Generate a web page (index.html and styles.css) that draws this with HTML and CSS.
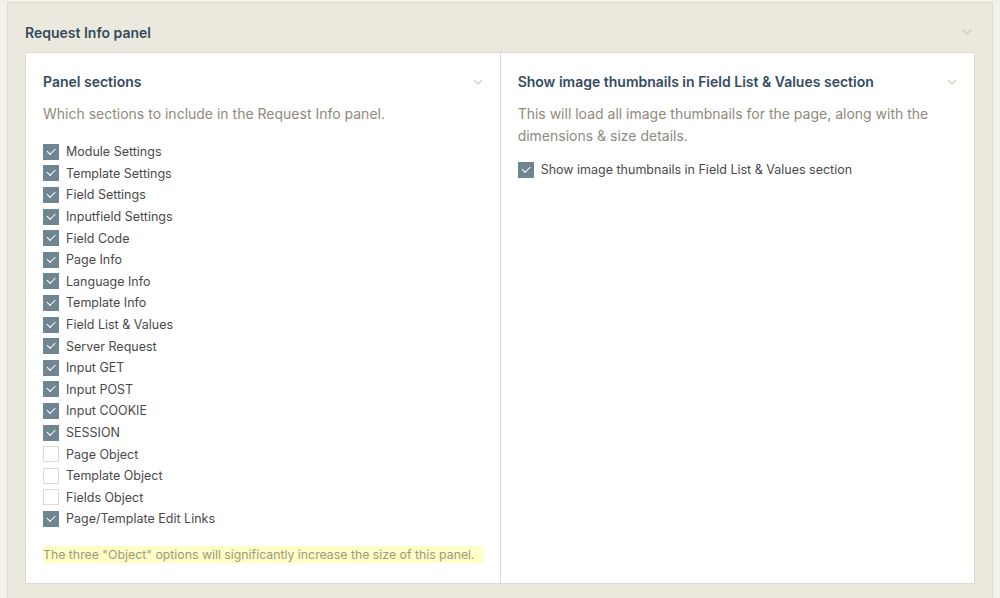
FILE: index.html
```html
<!DOCTYPE html>
<html lang="en">
<head>
  <meta charset="UTF-8" />
  <title>Request Info panel</title>
  <link rel="stylesheet" href="styles.css">
</head>
<body>

  <div class="wrapper">
    <div class="field">
      <div class="field-header">
        <span>Request Info panel</span>
        <svg class="chevron" width="10" height="6" viewBox="0 0 10 6"><path d="M1 1l4 4 4-4" /></svg>
      </div>

      <div class="field-content">
        <div class="col">
          <div class="col-header">
            <span>Panel sections</span>
            <svg class="chevron" width="10" height="6" viewBox="0 0 10 6"><path d="M1 1l4 4 4-4" /></svg>
          </div>
          <p class="desc">Which sections to include in the Request Info panel.</p>

          <ul class="checks">
            <li><span class="box on"></span>Module Settings</li>
            <li><span class="box on"></span>Template Settings</li>
            <li><span class="box on"></span>Field Settings</li>
            <li><span class="box on"></span>Inputfield Settings</li>
            <li><span class="box on"></span>Field Code</li>
            <li><span class="box on"></span>Page Info</li>
            <li><span class="box on"></span>Language Info</li>
            <li><span class="box on"></span>Template Info</li>
            <li><span class="box on"></span>Field List &amp; Values</li>
            <li><span class="box on"></span>Server Request</li>
            <li><span class="box on"></span>Input GET</li>
            <li><span class="box on"></span>Input POST</li>
            <li><span class="box on"></span>Input COOKIE</li>
            <li><span class="box on"></span>SESSION</li>
            <li><span class="box"></span>Page Object</li>
            <li><span class="box"></span>Template Object</li>
            <li><span class="box"></span>Fields Object</li>
            <li><span class="box on"></span>Page/Template Edit Links</li>
          </ul>

          <p class="notes"><span>The three "Object" options will significantly increase the size of this panel.</span></p>
        </div>

        <div class="col">
          <div class="col-header">
            <span>Show image thumbnails in Field List &amp; Values section</span>
            <svg class="chevron" width="10" height="6" viewBox="0 0 10 6"><path d="M1 1l4 4 4-4" /></svg>
          </div>
          <p class="desc">This will load all image thumbnails for the page, along with the dimensions &amp; size details.</p>

          <ul class="checks">
            <li><span class="box on"></span>Show image thumbnails in Field List &amp; Values section</li>
          </ul>
        </div>
      </div>
    </div>
  </div>

</body>
</html>
```

FILE: styles.css
```css
body {
  margin: 0;
  padding: 0;
  background: #f3f2ea;
  font-family: Inter, 'Noto Sans', sans-serif;
  color: #354b60;
}

.wrapper {
  padding: 2px 7px 0 7px;
}

.field {
  background: #ebe9dd;
  border: 1px solid #dedcd0;
  border-bottom: none;
  padding: 0 17px 14px 17px;
  height: 600px;
  box-sizing: border-box;
}

.field-header,
.col-header {
  display: flex;
  justify-content: space-between;
  align-items: center;
  font-weight: 600;
  font-size: 14px;
}

.field-header {
  height: 49px;
  padding-top: 9px;
  box-sizing: border-box;
  margin-right: 3px;
}

.chevron {
  fill: none;
  stroke: #cdc9b6;
  stroke-width: 1.1;
}

.field-content {
  display: flex;
  background: #fff;
  border: 1px solid #dedcd0;
  height: 532px;
  box-sizing: border-box;
}

.col {
  flex: 1;
  padding: 20px 17px 0 17px;
}

.col + .col {
  border-left: 1px solid #dedcd0;
}

.col-header {
  height: 17px;
}

.desc {
  margin: 13px 0 0;
  font-size: 14px;
  line-height: 22px;
  color: #8e8a7c;
  font-weight: 400;
}

.checks {
  list-style: none;
  margin: 16px 0 0;
  padding: 0;
  font-size: 12.5px;
  color: #4a4a4a;
}

.col + .col .checks {
  margin-top: 12px;
}

.checks li {
  display: flex;
  align-items: center;
  height: 21.6px;
}

.box {
  width: 14px;
  height: 14px;
  margin-right: 7px;
  border: 1px solid #dedcd0;
  background: #fff;
  flex-shrink: 0;
  position: relative;
}

.box.on {
  background: #6f8592;
  border-color: #6f8592;
}

.box.on::after {
  content: "";
  position: absolute;
  left: 3px;
  top: 3px;
  width: 7px;
  height: 3.5px;
  border-left: 1.5px solid #fff;
  border-bottom: 1.5px solid #fff;
  transform: rotate(-45deg);
}

.notes {
  margin: 16px 0 0;
  font-size: 12.3px;
  line-height: 18px;
  white-space: nowrap;
}

.notes span {
  background: #ffffc6;
  color: #9c9a7e;
  padding: 1px 8px 1px 0;
}
```
